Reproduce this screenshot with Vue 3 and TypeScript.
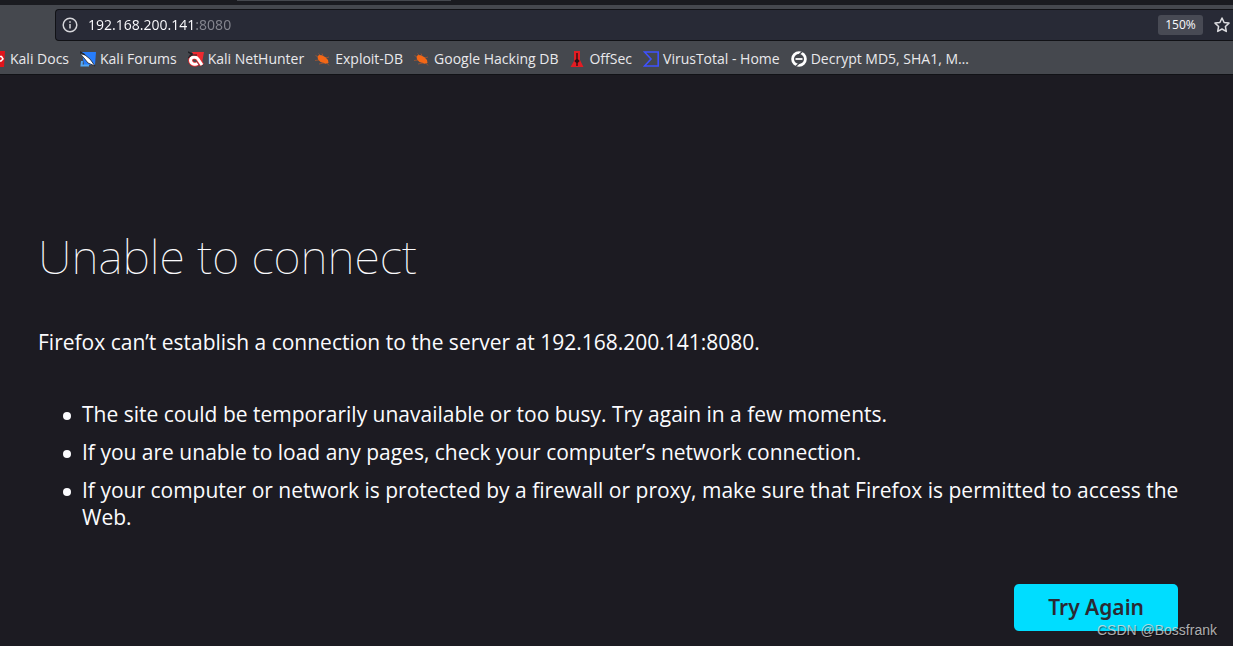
<script setup lang="ts">
import { ref } from 'vue'

interface Bookmark {
  icon: string
  label: string
}

const address = ref('192.168.200.141:8080')

const bookmarks: Bookmark[] = [
  { icon: 'docs', label: 'Kali Docs' },
  { icon: 'forums', label: 'Kali Forums' },
  { icon: 'nethunter', label: 'Kali NetHunter' },
  { icon: 'bug', label: 'Exploit-DB' },
  { icon: 'bug', label: 'Google Hacking DB' },
  { icon: 'offsec', label: 'OffSec' },
  { icon: 'virustotal', label: 'VirusTotal - Home' },
  { icon: 'decrypt', label: 'Decrypt MD5, SHA1, M…' },
]

const hints: string[] = [
  'The site could be temporarily unavailable or too busy. Try again in a few moments.',
  'If you are unable to load any pages, check your computer’s network connection.',
  'If your computer or network is protected by a firewall or proxy, make sure that Firefox is permitted to access the Web.',
]
</script>

<template>
  <div class="browser">
    <div class="tabs"><div class="tab"></div></div>
    <header class="toolbar">
      <div class="field">
        <button class="icon-button" type="button" aria-label="Site information">
          <svg width="16" height="16" viewBox="0 0 16 16" fill="none" stroke="#d5d5da" stroke-width="1.5">
            <circle cx="8" cy="8" r="6.8" />
            <path d="M8 7v4.5M8 4.2v1.5" />
          </svg>
        </button>
        <input v-model="address" class="address" type="text" aria-label="Address" spellcheck="false" />
        <button class="zoom" type="button">150%</button>
        <button class="icon-button" type="button" aria-label="Bookmark this page">
          <svg width="16" height="16" viewBox="0 0 16 16" fill="none" stroke="#dcdce0" stroke-width="1.5" stroke-linejoin="round">
            <path d="M8 1l2.1 4.5 4.9.6-3.6 3.4.9 4.9L8 12l-4.3 2.4.9-4.9L1 6.1l4.9-.6z" />
          </svg>
        </button>
      </div>
    </header>
    <nav class="bookmarks" aria-label="Bookmarks">
      <a v-for="b in bookmarks" :key="b.label" class="bookmark" href="#">
        <svg width="16" height="16" viewBox="0 0 16 16" aria-hidden="true">
          <template v-if="b.icon === 'docs'">
            <path d="M0 0h15l-1 16H0z" fill="#e0141c" />
            <path d="M8 5.500h3.500L13 8l-2 2H8" fill="none" stroke="#fff" stroke-width="1.500" />
          </template>
          <template v-else-if="b.icon === 'forums'">
            <path d="M2 1h14l-1 13H4z" fill="#277dfb" />
            <path d="M2 10l-.5 4.500H9" fill="none" stroke="#54a8f5" stroke-width="2" />
            <path d="M0 2.500L5 4l5 4 5 7-7-3-4-5z" fill="#fff" stroke="#202126" stroke-width=".8" />
            <path d="M0 .8l5 3" fill="none" stroke="#202126" stroke-width="1.200" />
          </template>
          <template v-else-if="b.icon === 'nethunter'">
            <path d="M4 1h12l-2 11-4-5-5-3z" fill="#ed2a30" />
            <path d="M0 1l4 2-3 3M10 8l5 6" fill="none" stroke="#202126" stroke-width="1.500" />
            <path d="M14 14L10 8C8 5 2.500 6 2.500 9.500c.5 4 5 4.500 7 3" fill="none" stroke="#ed2a30" stroke-width="4.600" />
            <path d="M14 14L10 8C8 5 2.500 6 2.500 9.500c.5 4 5 4.500 7 3" fill="none" stroke="#fff" stroke-width="3" />
            <path d="M0 7l4-3 5 0" fill="none" stroke="#202126" stroke-width="1" />
          </template>
          <template v-else-if="b.icon === 'bug'">
            <path d="M2.500 5.500L4 4l3 .2 3.500 2L13 9l.5 3-3 .7-5-1.700L3 8.500z" fill="#f36716" />
            <path d="M0 9.500l4-.5M5 4L3.500 2.500M8 4.500L7 2.500M11 7l3-1M9 12l-5 1M12 12l2 2.500M2.500 5.500L.5 4.500" stroke="#a15632" stroke-width=".8" />
          </template>
          <template v-else-if="b.icon === 'offsec'">
            <path d="M5 0h6v9l3.500 7h-13L5 10z" fill="#e31c23" />
            <path d="M7.300 2h1.400v6l2 2-2 2v3H7.300v-3l-2-2 2-2z" fill="#291116" />
          </template>
          <path
            v-else-if="b.icon === 'virustotal'"
            d="M1.500 1h13.700v14H1.500L8 8z"
            fill="none"
            stroke="#3e51ff"
            stroke-width="1.600"
          />
          <template v-else>
            <circle cx="8" cy="8" r="6.400" fill="none" stroke="#fff" stroke-width="2.800" />
            <path d="M4.500 8h7" stroke="#fff" stroke-width="1.800" />
            <path d="M12 0L7.500 4M4 16l4.500-4" stroke="#45484e" stroke-width="1.200" />
          </template>
        </svg>
        <span>{{ b.label }}</span>
      </a>
    </nav>
    <main class="page">
      <h1>Unable to connect</h1>
      <p>Firefox can’t establish a connection to the server at 192.168.200.141:8080.</p>
      <ul>
        <li v-for="hint in hints" :key="hint">{{ hint }}</li>
      </ul>
      <div class="actions">
        <button class="retry" type="button">Try Again</button>
      </div>
    </main>
    <div class="watermark">CSDN @Bossfrank</div>
  </div>
</template>

<style>
body {
  margin: 0;
  background: #1c1b22;
}
</style>

<style scoped>
.browser {
  position: relative;
  min-height: 100vh;
  overflow: hidden;
  background: #1c1b22;
  color: #fbfbfe;
  font-family: "Open Sans", "Noto Sans", sans-serif;
}
button,
input {
  border: 0;
  padding: 0;
  background: none;
  font: inherit;
  color: inherit;
}
svg {
  display: block;
  flex: none;
}
.tabs {
  height: 5px;
  background: #1a1b20;
}
.tab {
  width: 214px;
  height: 1px;
  margin-left: 237px;
  background: #45484e;
}
.toolbar {
  padding: 4px 0 4px 55px;
  background: #45484e;
}
.field {
  display: flex;
  align-items: center;
  box-sizing: border-box;
  height: 32px;
  padding: 0 3px 0 6px;
  border: 1px solid #111216;
  border-right: 0;
  border-radius: 4px 0 0 4px;
  background: #282a36;
}
.address {
  flex: 1;
  min-width: 0;
  margin-left: 10px;
  font-family: "Noto Sans", "Open Sans", sans-serif;
  font-size: 14px;
  line-height: 24px;
  background: linear-gradient(90deg, #fbfbfe 107px, #85868f 107px);
  background-clip: text;
  -webkit-background-clip: text;
  color: transparent;
  caret-color: #fbfbfe;
}
.zoom {
  width: 45px;
  height: 20px;
  margin-right: 11px;
  border-radius: 3px;
  background: #484a54;
  font-size: 12px;
  line-height: 20px;
}
.bookmarks {
  display: flex;
  gap: 11px;
  box-sizing: border-box;
  height: 29px;
  margin-bottom: 1px;
  padding-bottom: 1px;
  background: #45484e;
  box-shadow: 0 1px #111216;
}
.bookmark {
  display: flex;
  align-items: center;
  gap: 4px;
  color: #e9e9ec;
  font-size: 14px;
  line-height: 20px;
  white-space: nowrap;
  text-decoration: none;
}
.bookmark:first-child {
  margin-left: -10px;
}
.page {
  padding: 143px 55px 15px 38px;
  font-size: 21px;
  line-height: 27px;
}
h1 {
  margin: 0;
  font-family: "Noto Sans", "Open Sans", sans-serif;
  font-size: 47px;
  font-weight: 100;
  line-height: 76px;
}
p {
  margin: 35px 0 45px;
}
ul {
  margin: 0 -10px 0 0;
  padding-left: 44px;
  list-style: none;
}
li::before {
  content: "";
  display: inline-block;
  width: 8px;
  height: 8px;
  margin: 0 11px 2px -19px;
  border-radius: 50%;
  background: #fbfbfe;
}
li + li {
  margin-top: 11px;
}
.actions {
  display: flex;
  justify-content: flex-end;
  margin-top: 53px;
}
.retry {
  padding: 10px 34px;
  border-radius: 5px;
  background: #00ddff;
  color: #2b2a33;
  font-family: "Noto Sans", "Open Sans", sans-serif;
  font-weight: 600;
}
.watermark {
  position: absolute;
  right: 16px;
  bottom: 6px;
  color: rgba(225, 225, 225, 0.75);
  font-family: "Liberation Sans", sans-serif;
  font-size: 14px;
  line-height: 20px;
  text-shadow: 1px 1px 1px rgba(0, 0, 0, 0.5);
}
</style>
